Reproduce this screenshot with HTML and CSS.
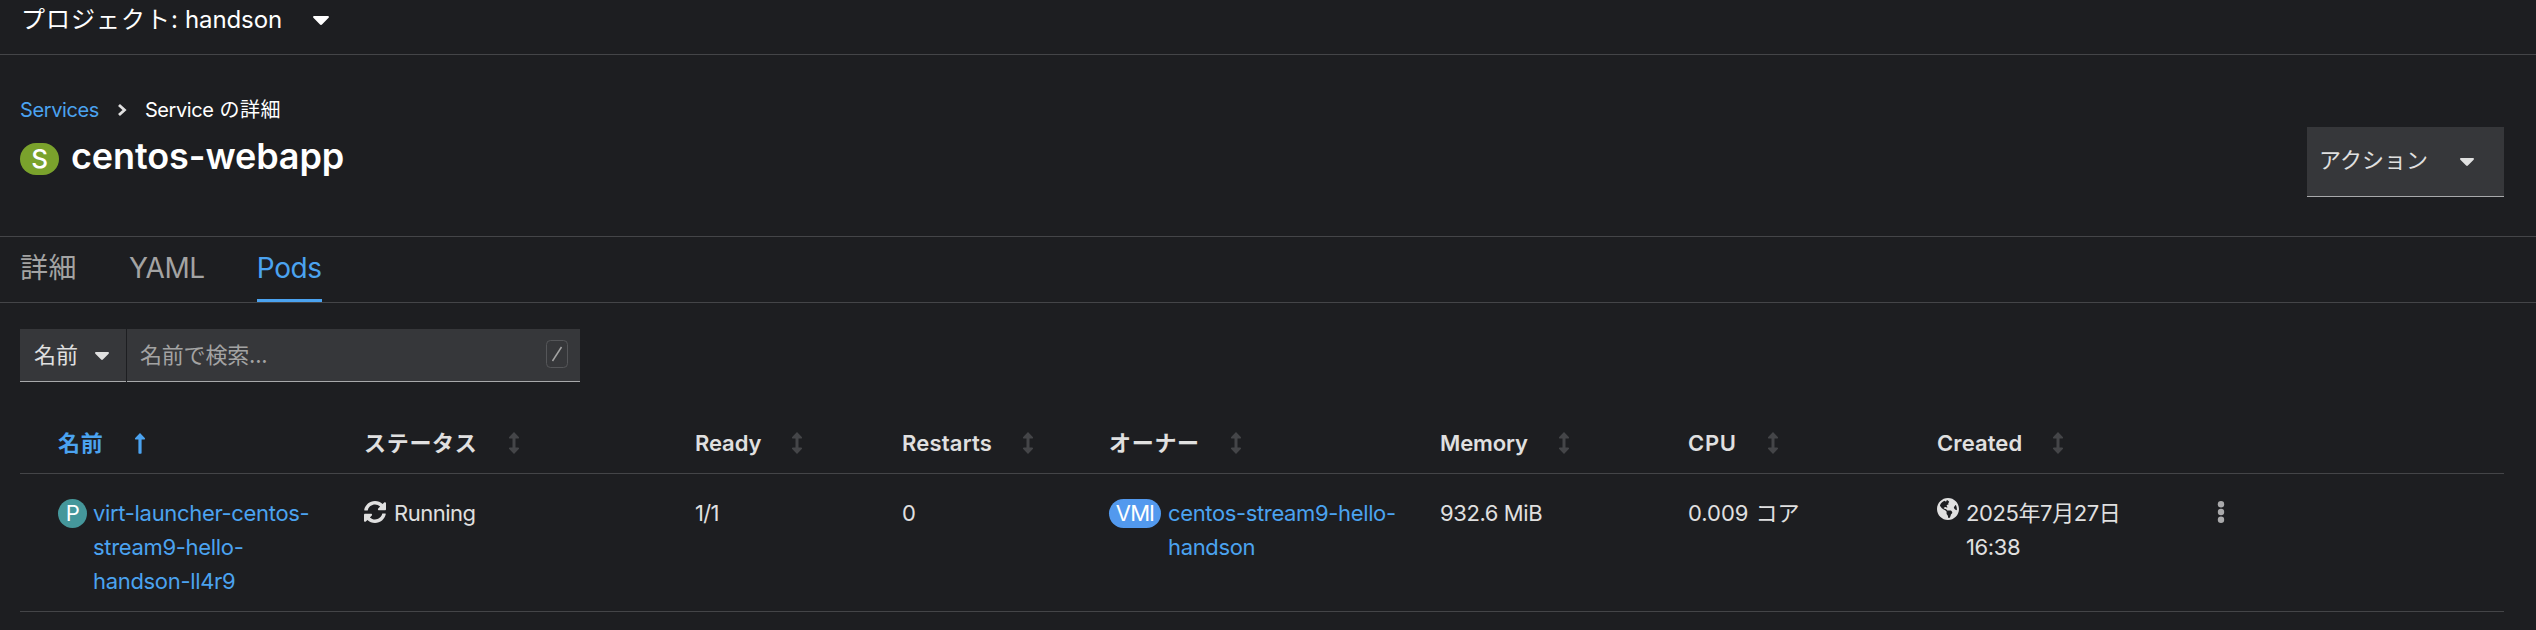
FILE: index.html
```html
<!DOCTYPE html>
<html lang="ja">
<head>
<meta charset="utf-8">
<title>centos-webapp</title>
<link rel="stylesheet" href="styles.css">
</head>
<body>
<svg class="symbols" width="0" height="0">
  <symbol id="sort" viewBox="0 0 10 22"><path d="M5 0l4.800 5a.9.9 0 0 1-.6 1.500H6.500v9h2.700a.9.9 0 0 1 .6 1.500L5 22 .2 17a.9.9 0 0 1 .6-1.500h2.700v-9H.8A.9.9 0 0 1 .2 5z"/></symbol>
  <symbol id="caret" viewBox="0 0 16 9"><path d="M1.200 0h13.600c1 0 1.500 1.100.8 1.800L9 8.500a1.400 1.400 0 0 1-2 0L.4 1.800C-.3 1.100.2 0 1.200 0z"/></symbol>
</svg>
<header class="project-bar">
  <span class="project-label">プロジェクト:</span>
  <span class="project-name">handson</span>
  <svg class="caret caret-lg"><use href="#caret"/></svg>
</header>
<section class="page-head">
  <div class="page-head-main">
    <nav class="breadcrumb">
      <a class="crumb-link">Services</a>
      <svg class="chevron" viewBox="0 0 10 14"><path d="M2 2l5.500 5L2 12"/></svg>
      <span class="crumb-latin">Service</span><span class="crumb-jp">の詳細</span>
    </nav>
    <h1 class="title"><span class="badge badge-s">S</span><span class="title-text">centos-webapp</span></h1>
  </div>
  <button class="actions"><span>アクション</span><svg class="caret"><use href="#caret"/></svg></button>
</section>
<nav class="tabs">
  <a class="tab tab-details">詳細</a>
  <a class="tab">YAML</a>
  <a class="tab tab-active">Pods</a>
</nav>
<div class="toolbar">
  <button class="filter-select"><span>名前</span><svg class="caret"><use href="#caret"/></svg></button>
  <div class="search"><span class="placeholder">名前で検索...</span><svg class="slash-key" viewBox="0 0 22 28"><rect x=".5" y=".5" width="21" height="27" rx="4"/><path d="M6.500 21L15.500 7"/></svg></div>
</div>
<div class="table">
  <div class="row head">
    <div class="cell sorted"><span class="h-jp">名前</span><svg class="sort-up" viewBox="0 0 10 21"><path d="M5 0l4.800 5a.9.9 0 0 1-.6 1.500H6.600V20q0 .7-.7.7H4.100q-.7 0-.7-.7V6.500H.8A.9.9 0 0 1 .2 5z"/></svg></div>
    <div class="cell"><span class="h-jp">ステータス</span><svg class="sort"><use href="#sort"/></svg></div>
    <div class="cell"><span class="h-ready">Ready</span><svg class="sort"><use href="#sort"/></svg></div>
    <div class="cell"><span class="h-restarts">Restarts</span><svg class="sort"><use href="#sort"/></svg></div>
    <div class="cell"><span class="h-jp">オーナー</span><svg class="sort"><use href="#sort"/></svg></div>
    <div class="cell"><span class="h-memory">Memory</span><svg class="sort"><use href="#sort"/></svg></div>
    <div class="cell"><span class="h-cpu">CPU</span><svg class="sort"><use href="#sort"/></svg></div>
    <div class="cell"><span class="h-created">Created</span><svg class="sort"><use href="#sort"/></svg></div>
    <div class="cell"></div>
  </div>
  <div class="row body">
    <div class="cell"><span class="badge badge-p">P</span><a class="link">virt-launcher-centos-<br>stream9-hello-<br>handson-ll4r9</a></div>
    <div class="cell"><svg class="sync" viewBox="8 8 496 496"><path d="M370.720 133.280C339.458 104.008 298.888 87.962 255.848 88c-77.458.068-144.328 53.178-162.791 126.850-1.344 5.363-6.122 9.150-11.651 9.150H24.103c-7.498 0-13.194-6.807-11.807-14.176C33.933 94.924 134.813 8 256 8c66.448 0 126.791 26.136 171.315 68.685L463.030 40.970C478.149 25.851 504 36.559 504 57.941V192c0 13.255-10.745 24-24 24H345.941c-21.382 0-32.090-25.851-16.971-40.971l41.750-41.749zM32 296h134.059c21.382 0 32.090 25.851 16.971 40.971l-41.750 41.750c31.262 29.273 71.835 45.319 114.876 45.280 77.418-.070 144.315-53.144 162.787-126.849 1.344-5.363 6.122-9.150 11.651-9.150h57.304c7.498 0 13.194 6.807 11.807 14.176C478.067 417.076 377.187 504 256 504c-66.448 0-126.791-26.136-171.315-68.685L48.970 471.030C33.851 486.149 8 475.441 8 454.059V320c0-13.255 10.745-24 24-24z"/></svg><span class="status">Running</span></div>
    <div class="cell"><span class="ready">1/1</span></div>
    <div class="cell"><span>0</span></div>
    <div class="cell"><span class="badge badge-vmi">VMI</span><a class="link owner">centos-stream9-hello-<br>handson</a></div>
    <div class="cell"><span class="memory">932.6 MiB</span></div>
    <div class="cell"><span class="cpu">0.009</span><span class="unit">コア</span></div>
    <div class="cell"><svg class="globe" viewBox="0 8 496 496"><path d="M248 8C111.030 8 0 119.030 0 256s111.030 248 248 248 248-111.030 248-248S384.970 8 248 8zm82.290 357.600c-3.900 3.880-7.990 7.950-11.310 11.280-2.990 3-5.100 6.700-6.170 10.710-1.510 5.660-2.730 11.380-4.770 16.870l-17.390 46.850c-13.760 3-28 4.690-42.650 4.690v-27.380c1.690-12.620-7.640-36.260-22.630-51.250-6-6-9.370-14.140-9.370-22.630v-32.010c0-11.640-6.270-22.340-16.460-27.970-14.370-7.950-34.810-19.060-48.810-26.110-11.480-5.780-22.100-13.140-31.650-21.750l-.8-.72a114.792 114.792 0 0 1-18.060-20.740c-9.380-13.770-24.660-36.420-34.590-51.140 20.470-45.500 57.360-82.040 103.200-101.890l24.010 12.010C203.480 89.740 216 82.010 216 70.110v-11.300c7.990-1.290 16.120-2.110 24.390-2.420l28.300 28.300c6.250 6.250 6.250 16.380 0 22.630L264 112l-10.340 10.340c-3.120 3.120-3.120 8.190 0 11.310l4.690 4.690c3.120 3.120 3.120 8.190 0 11.310l-8 8a8.008 8.008 0 0 1-5.660 2.340h-8.990c-2.080 0-4.080.81-5.580 2.270l-9.920 9.650a8.008 8.008 0 0 0-1.580 9.310l15.590 31.190c2.660 5.320-1.210 11.580-7.150 11.580h-5.640c-1.930 0-3.790-.7-5.240-1.960l-9.280-8.060a16.017 16.017 0 0 0-15.550-3.100l-31.170 10.390a11.950 11.950 0 0 0-8.170 11.340c0 4.530 2.560 8.660 6.610 10.690l11.080 5.540c9.410 4.710 19.790 7.160 30.310 7.160s22.590 27.290 32 32h66.750c8.490 0 16.620 3.370 22.630 9.370l13.690 13.690a30.503 30.503 0 0 1 8.930 21.570 46.536 46.536 0 0 1-13.720 32.980zM417 274.250c-5.790-1.450-10.840-5-14.150-9.970l-17.980-26.970a23.970 23.970 0 0 1 0-26.620l19.590-29.380c2.320-3.470 5.500-6.290 9.240-8.150l12.980-6.490C440.200 193.590 448 223.870 448 256c0 8.670-.74 17.160-1.820 25.540L417 274.250z"/></svg><span class="date">2025年7月27日<br>16:38</span></div>
    <div class="cell"><svg class="kebab" viewBox="0 0 8 22"><circle cx="4" cy="3.300" r="3.200"/><circle cx="4" cy="11" r="3.200"/><circle cx="4" cy="18.700" r="3.200"/></svg></div>
  </div>
</div>
</body>
</html>
```
FILE: styles.css
```css
* { box-sizing: border-box; }
body {
  margin: 0;
  background: #1d1e21;
  color: #e0e0e0;
  font-family: "Inter", "Noto Sans CJK JP", sans-serif;
  font-size: 22px;
  line-height: 34px;
}
svg { display: block; flex: none; fill: currentColor; }
button { all: unset; box-sizing: border-box; }
.symbols { position: absolute; }

/* Project selector */
.project-bar {
  display: flex;
  height: 55px;
  padding: 3px 0 0 21px;
  border-bottom: 1px solid #444548;
  font-size: 24px;
  color: #fff;
}
.project-label { letter-spacing: 1px; }
.project-name { margin-left: 6px; letter-spacing: -0.1px; }
.caret { width: 14px; height: 8px; }
.caret-lg { width: 16px; height: 9px; margin: 13px 0 0 31px; }

/* Page heading */
.page-head {
  display: flex;
  justify-content: space-between;
  height: 182px;
  padding: 37px 32px 0 20px;
  border-bottom: 1px solid #444548;
}
.breadcrumb { display: flex; align-items: center; height: 36px; font-size: 20px; letter-spacing: -0.4px; color: #fff; }
.crumb-link { color: #4ba3f0; }
.chevron { width: 10px; height: 14px; margin: 0 18px; fill: none; stroke: #e0e0e0; stroke-width: 2.800; }
.crumb-jp { margin-left: 6px; letter-spacing: 0.4px; }
.title { display: flex; align-items: center; margin: 0; height: 56px; font-size: 36px; font-weight: 600; letter-spacing: -0.1px; color: #fff; }
.badge { flex: none; color: #fff; text-align: center; }
.badge-s { width: 39px; height: 32px; margin: 5px 12px 0 0; border-radius: 16px; background: #7aa22c; font-size: 26px; font-weight: 500; line-height: 32px; }
.actions {
  display: flex;
  justify-content: space-between;
  width: 197px;
  height: 70px;
  margin-top: 35px;
  padding: 16px 30px 0 12px;
  background: #36373a;
  border-bottom: 1px solid #a8a9ab;
}
.actions .caret { margin-top: 15px; }

/* Tabs */
.tabs {
  display: flex;
  gap: 52px;
  height: 66px;
  padding-left: 20px;
  border-bottom: 1px solid #444548;
  font-size: 28px;
  letter-spacing: -0.4px;
  color: #a3a3a3;
}
.tab { height: 65px; padding-top: 14px; }
.tab-details { letter-spacing: 0.5px; }
.tab-active { color: #4ba3f0; border-bottom: 3px solid #4ba3f0; }

/* Filter toolbar */
.toolbar { display: flex; gap: 1px; margin: 26px 0 0 20px; }
.filter-select { display: flex; width: 106px; height: 53px; padding: 9px 0 0 14px; background: #36373a; border-bottom: 1px solid #a8a9ab; }
.filter-select .caret { margin: 14px 0 0 17px; }
.search { display: flex; justify-content: space-between; width: 453px; height: 53px; padding: 9px 12px 0 13px; background: #36373a; border-bottom: 1px solid #a8a9ab; color: #a3a3a3; }
.placeholder { letter-spacing: -0.2px; }
.slash-key { width: 22px; height: 28px; margin-top: 2px; fill: none; stroke: #a3a3a3; stroke-width: 1.500; }
.slash-key rect { stroke: #555659; stroke-width: 1; }

/* Pod table */
.table { margin: 38px 32px 0 20px; }
.row {
  display: grid;
  grid-template-columns: 306px 331px 207px 207px 331px 248px 249px 280px 1fr;
  padding-left: 38px;
  border-bottom: 1px solid #444548;
}
.head { height: 54px; padding-top: 6px; font-weight: 600; }
.body { height: 138px; padding-top: 22px; letter-spacing: -0.32px; }
.cell { display: flex; align-items: flex-start; }
.sorted { color: #4ba3f0; }
.h-jp { letter-spacing: 0.7px; }
.h-ready { letter-spacing: -0.1px; }
.h-restarts { letter-spacing: 0.2px; }
.h-memory { letter-spacing: -0.1px; }
.h-cpu { letter-spacing: 0.7px; }
.h-created { letter-spacing: 0.1px; }
.sort { width: 10px; height: 22px; margin: 6px 0 0 31px; color: #444548; }
.sort-up { width: 10px; height: 21px; margin: 7px 0 0 32px; }
.link { color: #4ba3f0; }
.owner { letter-spacing: -0.36px; }
.badge-p { width: 29px; height: 29px; margin: 3px 6px 0 0; border-radius: 15px; background: #45979b; line-height: 28px; }
.badge-vmi { width: 52px; height: 29px; margin: 3px 7px 0 0; border-radius: 15px; background: #5299ee; line-height: 28px; letter-spacing: -0.9px; }
.sync { width: 22px; height: 22px; margin: 5px 8px 0 0; }
.status { letter-spacing: -0.5px; }
.ready { letter-spacing: -0.7px; }
.memory { letter-spacing: -0.4px; }
.cpu { letter-spacing: 0; }
.unit { margin-left: 7px; letter-spacing: 0; }
.globe { width: 22px; height: 22px; margin: 2px 7px 0 0; }
.date { letter-spacing: -0.4px; }
.kebab { width: 8px; height: 22px; margin-top: 5px; color: #a9a9ab; }
```
